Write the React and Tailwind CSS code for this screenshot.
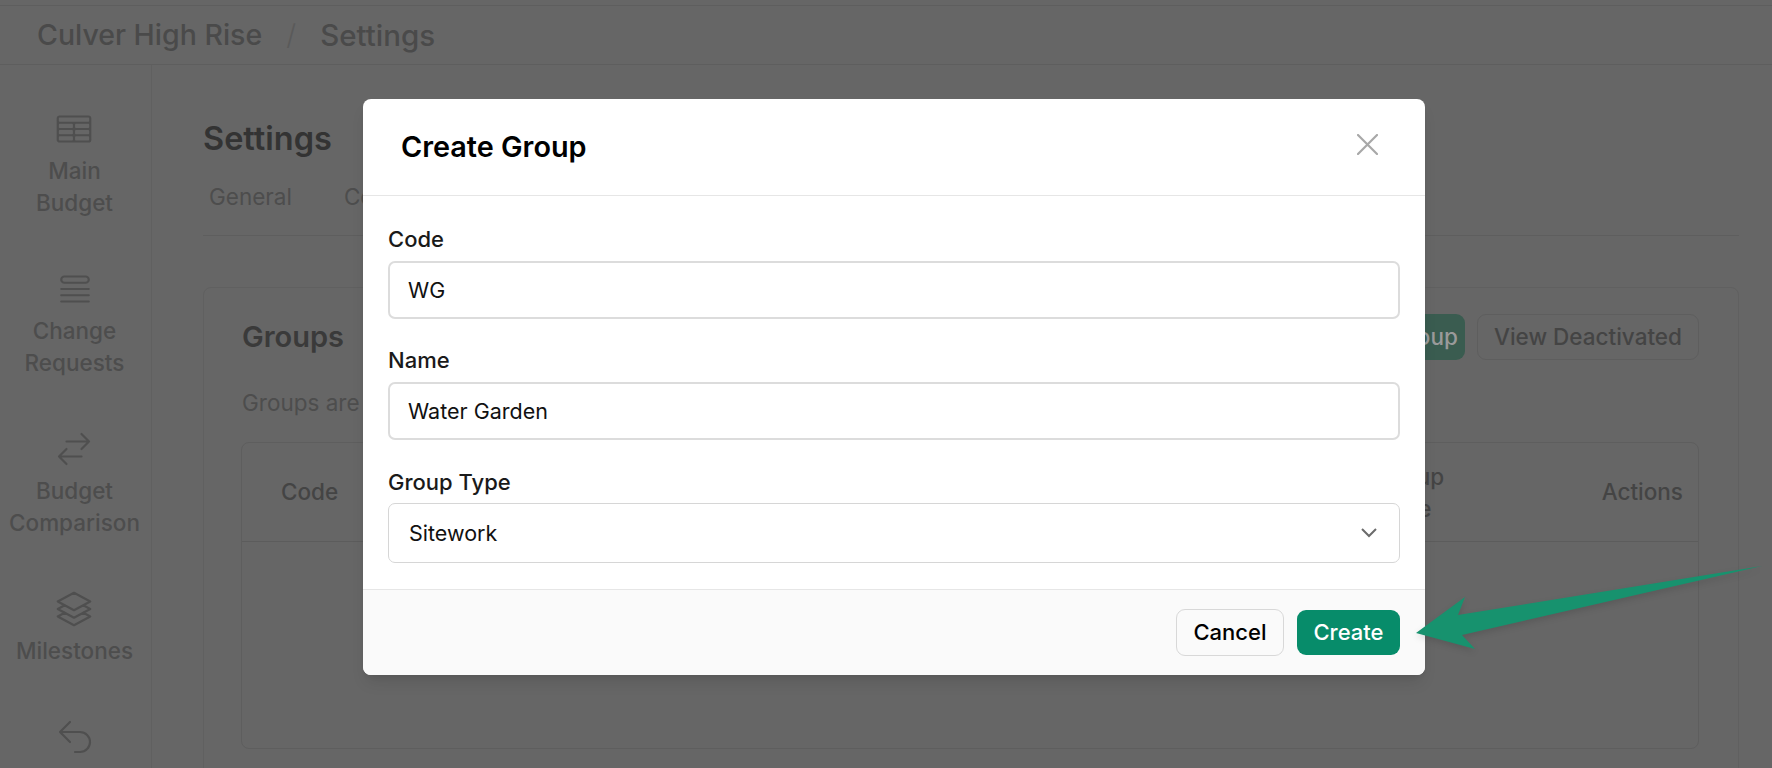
import React from 'react';

function Icon({ d }) {
  return (
    <svg width="40" height="40" viewBox="0 0 24 24" fill="none" stroke="#4f4f4f" strokeWidth="1.3" strokeLinecap="round" strokeLinejoin="round">
      <path d={d} />
    </svg>
  );
}

const NAV = [
  {
    label: ['Main', 'Budget'],
    d: 'M3.375 19.5h17.25m-17.25 0a1.125 1.125 0 0 1-1.125-1.125M3.375 19.5h7.5c.621 0 1.125-.504 1.125-1.125m-9.75 0V5.625m0 12.75v-1.5c0-.621.504-1.125 1.125-1.125m18.375 2.625V5.625m0 12.75c0 .621-.504 1.125-1.125 1.125m1.125-1.125v-1.5c0-.621-.504-1.125-1.125-1.125m0 3.75h-7.5A1.125 1.125 0 0 1 12 18.375m9.75-12.75c0-.621-.504-1.125-1.125-1.125H3.375c-.621 0-1.125.504-1.125 1.125m19.5 0v1.5c0 .621-.504 1.125-1.125 1.125M2.25 5.625v1.5c0 .621.504 1.125 1.125 1.125m0 0h17.25m-17.25 0h7.5c.621 0 1.125.504 1.125 1.125M3.375 8.25c-.621 0-1.125.504-1.125 1.125v1.5c0 .621.504 1.125 1.125 1.125m17.25-3.75h-7.5c-.621 0-1.125.504-1.125 1.125m8.625-1.125c.621 0 1.125.504 1.125 1.125v1.5c0 .621-.504 1.125-1.125 1.125m-17.25 0h7.5m-7.5 0c-.621 0-1.125.504-1.125 1.125v1.5c0 .621.504 1.125 1.125 1.125M12 10.875v-1.5m0 1.5c0 .621-.504 1.125-1.125 1.125M12 10.875c0 .621.504 1.125 1.125 1.125m-2.25 0c.621 0 1.125.504 1.125 1.125M13.125 12h7.5m-7.5 0c-.621 0-1.125.504-1.125 1.125M20.625 12c.621 0 1.125.504 1.125 1.125v1.5c0 .621-.504 1.125-1.125 1.125m-17.25 0h7.5M12 14.625v-1.5m0 1.5c0 .621-.504 1.125-1.125 1.125M12 14.625c0 .621.504 1.125 1.125 1.125m-2.25 0c.621 0 1.125.504 1.125 1.125m0 1.5v-1.5m0 0c0-.621.504-1.125 1.125-1.125m0 0h7.5',
  },
  {
    label: ['Change', 'Requests'],
    d: 'M3.75 12h16.5m-16.5 3.75h16.5m-16.5 3.75h16.5M5.625 4.5h12.75a1.875 1.875 0 0 1 0 3.75H5.625a1.875 1.875 0 0 1 0-3.75Z',
  },
  {
    label: ['Budget', 'Comparison'],
    d: 'M7.5 21 3 16.5m0 0L7.5 12M3 16.5h13.5m0-13.5L21 7.5m0 0L16.5 12M21 7.5H7.5',
  },
  {
    label: ['Milestones'],
    d: 'M6.429 9.75 2.25 12l4.179 2.25m0-4.5 5.571 3 5.571-3m-11.142 0L2.25 7.5 12 2.25l9.75 5.25-4.179 2.25m0 0L21.75 12l-4.179 2.25m0 0 4.179 2.25L12 21.75 2.25 16.5l4.179-2.25m11.142 0-5.571 3-5.571-3',
  },
  {
    label: [],
    d: 'M9 15 3 9m0 0 6-6M3 9h12a6 6 0 0 1 0 12h-3',
  },
];

function Field({ label, value, className }) {
  return (
    <div className={className}>
      <label className="block text-[22px] leading-[32px] font-medium text-[#1a1a1a] mb-[6px]">{label}</label>
      <input
        readOnly
        value={value}
        className="block w-full h-[58px] px-[18px] text-[21.5px] text-[#111] bg-white border-2 border-[#dcdcdc] rounded-[7px] outline-none"
      />
    </div>
  );
}

export default function App() {
  return (
    <div className="relative h-screen overflow-hidden bg-[#666666] font-['Inter',sans-serif]">
      {/* page behind the dialog, already dimmed */}
      <div className="h-[6px] border-b border-[#5e5e5e]" />
      <header className="h-[59px] border-b border-[#5e5e5e] pl-[37px] flex items-center text-[28.5px] font-medium text-[#4a4a4a]">
        <span>Culver High Rise</span>
        <span className="w-[58px] text-center font-light text-[#5a5a5a]">/</span>
        <span className="text-[29.5px]">Settings</span>
      </header>

      <div className="flex h-[704px]">
        <nav className="w-[152px] shrink-0 border-r border-[#606060] pt-[44px] pr-[2px] flex flex-col items-center gap-[50px]">
          {NAV.map((item, i) => (
            <div key={i} className="flex flex-col items-center text-center">
              <div className="mb-[6px]"><Icon d={item.d} /></div>
              <div className="text-[22.5px] leading-[32px] font-medium text-[#4d4d4d]">
                {item.label.map((l) => <div key={l}>{l}</div>)}
              </div>
            </div>
          ))}
        </nav>

        <main className="flex-1 pl-[51px] pr-[33px]">
          <h1 className="pt-[52px] text-[32.5px] leading-[44px] font-semibold text-[#333333]">Settings</h1>
          <div className="h-[75px] border-b border-[#5e5e5e] pl-[6px] pt-[20px] flex gap-[52px] text-[22.5px] leading-[32px] text-[#4d4d4d]">
            <span>General</span>
            <span>Contacts</span>
          </div>

          <section className="mt-[51px] h-[600px] border border-[#606060] rounded-[8px] pl-[37px] pr-[39px]">
            <div className="flex items-center h-[98px] pl-[1px]">
              <h2 className="flex-1 text-[29px] font-semibold text-[#3a3a3a]">Groups</h2>
              <div className="h-[46px] w-[130px] rounded-[9px] bg-[#3a5c50] text-[22.5px] font-medium text-[#9a9a9a] flex items-center justify-center">Add Group</div>
              <div className="ml-[12px] h-[46px] w-[222px] rounded-[9px] border border-[#5e5e5e] text-[22.5px] font-medium text-[#444] flex items-center justify-center">View Deactivated</div>
            </div>
            <p className="h-[56px] pt-[1px] pl-[1px] text-[22.5px] leading-[32px] text-[#4d4d4d]">Groups are</p>
            <div className="h-[307px] border border-[#5e5e5e] rounded-[8px]">
              <div className="relative h-[99px] border-b border-[#5c5c5c] flex items-center justify-between pl-[39px] pr-[15px] text-[22.5px] font-medium text-[#444]">
                <span>Code</span>
                <span className="absolute left-[1136px] top-[18px] leading-[32px]">Group<br />Type</span>
                <span>Actions</span>
              </div>
            </div>
          </section>
        </main>
      </div>

      {/* dialog */}
      <div className="absolute inset-0 flex justify-center pt-[99px] pl-[16px]">
        <div className="w-[1062px] h-[576px] bg-white rounded-[8px] overflow-hidden shadow-lg flex flex-col">
          <div className="h-[97px] shrink-0 border-b border-[#e6e6e6] pl-[38px] pr-[47px] flex items-center justify-between">
            <h3 className="text-[28.8px] font-semibold text-black">Create Group</h3>
            <svg width="21" height="21" viewBox="0 0 21 21" fill="none" stroke="#a8a8a8" strokeWidth="2.2" strokeLinecap="round" className="mb-[6px]">
              <path d="M1 1l19 19M20 1L1 20" />
            </svg>
          </div>

          <div className="flex-1 px-[25px] pt-[27px]">
            <Field label="Code" value="WG" />
            <Field label="Name" value="Water Garden" className="mt-[25px]" />
            <div className="mt-[26px]">
              <label className="block text-[22px] leading-[32px] font-medium text-[#1a1a1a] mb-[5px]">Group Type</label>
              <div className="relative">
                <select className="block w-full h-[60px] pl-[20px] text-[21.5px] text-[#111] bg-white border border-[#d6d6d6] rounded-[7px] appearance-none outline-none">
                  <option>Sitework</option>
                </select>
                <svg width="16" height="10" viewBox="0 0 16 10" fill="none" stroke="#6b6b6b" strokeWidth="2" className="absolute right-[23px] top-[25px]">
                  <path d="M1 1l7 7 7-7" />
                </svg>
              </div>
            </div>
          </div>

          <div className="h-[86px] shrink-0 border-t border-[#e6e6e6] bg-[#fafafa] pr-[25px] flex items-center justify-end gap-[13px]">
            <button className="h-[47px] w-[108px] rounded-[9px] border border-[#d8d8d8] text-[22px] font-medium text-black">Cancel</button>
            <button className="h-[45px] w-[103px] rounded-[9px] bg-[#078c6a] text-[22px] font-medium text-white">Create</button>
          </div>
        </div>
      </div>

      {/* annotation arrow */}
      <svg width="372" height="110" viewBox="0 0 372 110" className="absolute left-[1400px] top-[550px] drop-shadow-md">
        <polygon points="16,83 65,47 58,65 362,16 62,85 75,99" fill="#17926e" />
      </svg>
    </div>
  );
}
